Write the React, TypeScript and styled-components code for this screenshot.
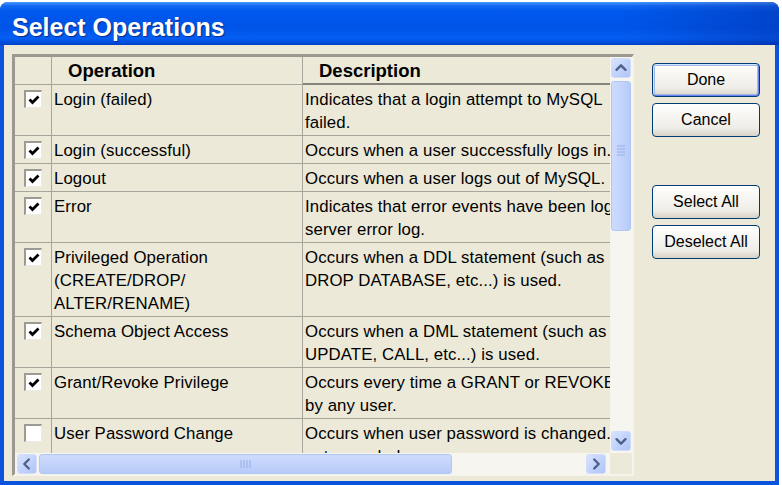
import React from "react";
import styled, { createGlobalStyle, css } from "styled-components";

const Global = createGlobalStyle`
  html, body { margin: 0; padding: 0; background: #ffffff; }
  body { width: 782px; height: 485px; overflow: hidden; font-family: "Liberation Sans", Arial, sans-serif; }
  * { box-sizing: border-box; }
`;

const Page = styled.div`
  width: 782px;
  height: 485px;
  padding-top: 2px;
`;

const Window = styled.div`
  width: 779px;
  height: 483px;
  display: flex;
  flex-direction: column;
  background: #0a54dd;
  border-radius: 8px 8px 0 0;
  overflow: hidden;
`;

const TitleBar = styled.div`
  height: 43px;
  flex: none;
  display: flex;
  align-items: center;
  padding: 8px 0 0 12px;
  background:
    linear-gradient(90deg, rgba(0, 20, 120, 0) 80%, rgba(0, 20, 120, 0.28) 100%),
    linear-gradient(180deg, #4a9bff 0%, #1268f4 9%, #0058ec 22%, #0054e8 60%, #055ef2 84%, #0050e0 93%, #003ec6 100%);
`;

const Title = styled.span`
  font-family: "Liberation Sans", Arial, sans-serif;
  font-weight: bold;
  font-size: 25px;
  color: #ffffff;
  text-shadow: 1px 1px 1px #0b2a8c;
`;

const Body = styled.div`
  flex: 1;
  margin: 0 4px 4px 4px;
  background: #ece9d8;
  display: flex;
  align-items: flex-start;
  padding: 9px 0 0 8px;
`;

const ListBox = styled.div`
  width: 622px;
  height: 422px;
  flex: none;
  border-style: solid;
  border-width: 3px 2px 2px 3px;
  border-color: #9b998f #f4f3ec #f4f3ec #9b998f;
  display: grid;
  grid-template-columns: 595px 22px;
  grid-template-rows: 396px 21px;
  background: #ece9d8;
`;

const Table = styled.div`
  grid-area: 1 / 1;
  overflow: hidden;
  display: flex;
  flex-direction: column;
`;

const COLS = "37px 251px 340px";

const HeaderRow = styled.div`
  display: grid;
  grid-template-columns: ${COLS};
  height: 28px;
  flex: none;
`;

const HeaderCell = styled.div<{ $active?: boolean }>`
  border-right: 1px solid #a8a69c;
  border-bottom: ${(p) => (p.$active ? "2px solid #858379" : "1px solid #a8a69c")};
  font-family: "Liberation Sans", Arial, sans-serif;
  font-weight: bold;
  font-size: 18.5px;
  line-height: 27px;
  padding-left: 16px;
  color: #000;
  white-space: nowrap;
  overflow: hidden;
`;

const Row = styled.div`
  display: grid;
  grid-template-columns: ${COLS};
  flex: none;
`;

const CheckCell = styled.div`
  border-right: 1px solid #a8a69c;
  border-bottom: 1px solid #a8a69c;
  display: flex;
  justify-content: center;
  align-items: flex-start;
  padding-top: 5px;
`;

const TextCell = styled.div`
  border-right: 1px solid #a8a69c;
  border-bottom: 1px solid #a8a69c;
  padding: 3px 0 1px 2px;
  font-size: 16.8px;
  letter-spacing: 0.1px;
  line-height: 23px;
  color: #000;
  white-space: nowrap;
  overflow: hidden;
`;

const Line = styled.div`
  display: block;
`;

const CheckBox = styled.div`
  width: 18px;
  height: 18px;
  background: #ffffff;
  border-style: solid;
  border-width: 2px 1px 1px 2px;
  border-color: #9c9a91 #ebeae4 #ebeae4 #9c9a91;
  display: flex;
  align-items: center;
  justify-content: center;
`;

const VScroll = styled.div`
  grid-area: 1 / 2;
  background: #f6f5f0;
  display: flex;
  flex-direction: column;
  align-items: center;
  padding: 1px 0 2px 0;
`;

const HScroll = styled.div`
  grid-area: 2 / 1;
  background: #f6f5f0;
  display: flex;
  align-items: center;
  padding: 0 4px 0 2px;
`;

const Corner = styled.div`
  grid-area: 2 / 2;
  background: #ece9d8;
`;

const ArrowBtn = styled.div`
  width: 20px;
  height: 20px;
  flex: none;
  border-radius: 3px;
  border: 1px solid #d2ddfb;
  background: linear-gradient(135deg, #d8e3fe 0%, #c2d3fc 50%, #b0c5f6 100%);
  display: flex;
  align-items: center;
  justify-content: center;
`;

const Thumb = styled.div<{ $horizontal?: boolean }>`
  flex: none;
  border-radius: 3px;
  border: 1px solid #b2c6f4;
  background: ${(p) =>
    p.$horizontal
      ? "linear-gradient(180deg, #cddbfd 0%, #c1d2fb 60%, #b7cbf8 100%)"
      : "linear-gradient(90deg, #cddbfd 0%, #c1d2fb 60%, #b7cbf8 100%)"};
  display: flex;
  align-items: center;
  justify-content: center;
  ${(p) =>
    p.$horizontal
      ? css`
          height: 20px;
          width: 413px;
          margin-left: 2px;
        `
      : css`
          width: 20px;
          height: 150px;
          margin-top: 3px;
          padding-bottom: 10px;
        `}
`;

const Spacer = styled.div`
  flex: 1;
`;

const ButtonColumn = styled.div`
  margin-left: 18px;
  padding-top: 9px;
  display: flex;
  flex-direction: column;
`;

const ButtonGroup = styled.div<{ $offset?: number }>`
  display: flex;
  flex-direction: column;
  gap: 6px;
  margin-top: ${(p) => p.$offset ?? 0}px;
`;

const Button = styled.button<{ $default?: boolean }>`
  width: 108px;
  height: 34px;
  padding: 0;
  border: 1px solid #003c74;
  border-radius: 4px;
  background: linear-gradient(180deg, #ffffff 0%, #f7f6f2 35%, #eeede8 75%, #d9d3c7 100%);
  font-family: "Liberation Sans", Arial, sans-serif;
  font-size: 16px;
  color: #000;
  ${(p) =>
    p.$default &&
    css`
      box-shadow: inset 1px 1px 0 #cee7ff, inset -1px -1px 0 #6982ee, inset 0 0 0 2px #9fb9ea;
    `}
`;

const Check = () => (
  <svg width="14" height="14" viewBox="0 0 14 14">
    <polyline points="2.5,6.5 5.5,9.5 11.5,3.5" fill="none" stroke="#000" strokeWidth="2.8" strokeLinecap="butt" strokeLinejoin="miter" />
  </svg>
);

const Chevron = ({ dir }: { dir: "up" | "down" | "left" | "right" }) => {
  const pts: Record<string, string> = {
    up: "5,12 10,7 15,12",
    down: "5,8 10,13 15,8",
    left: "12,5 7,10 12,15",
    right: "8,5 13,10 8,15",
  };
  return (
    <svg width="20" height="20" viewBox="0 0 20 20">
      <polyline points={pts[dir]} fill="none" stroke="#4d6185" strokeWidth="2.6" strokeLinecap="round" strokeLinejoin="round" />
    </svg>
  );
};

const Grip = ({ horizontal }: { horizontal?: boolean }) =>
  horizontal ? (
    <svg width="12" height="10" viewBox="0 0 12 10">
      {[1, 4, 7, 10].map((x) => (
        <line key={x} x1={x} y1="1" x2={x} y2="9" stroke="#94aee8" strokeWidth="1" />
      ))}
    </svg>
  ) : (
    <svg width="10" height="12" viewBox="0 0 10 12">
      {[1, 4, 7, 10].map((y) => (
        <line key={y} x1="1" y1={y} x2="9" y2={y} stroke="#94aee8" strokeWidth="1" />
      ))}
    </svg>
  );

type Op = { checked: boolean; name: string[]; desc: string[] };

const ops: Op[] = [
  { checked: true, name: ["Login (failed)"], desc: ["Indicates that a login attempt to MySQL", "failed."] },
  { checked: true, name: ["Login (successful)"], desc: ["Occurs when a user successfully logs in."] },
  { checked: true, name: ["Logout"], desc: ["Occurs when a user logs out of MySQL."] },
  { checked: true, name: ["Error"], desc: ["Indicates that error events have been logged", "server error log."] },
  {
    checked: true,
    name: ["Privileged Operation", "(CREATE/DROP/", "ALTER/RENAME)"],
    desc: ["Occurs when a DDL statement (such as", "DROP DATABASE, etc...) is used."],
  },
  {
    checked: true,
    name: ["Schema Object Access"],
    desc: ["Occurs when a DML statement (such as", "UPDATE, CALL, etc...) is used."],
  },
  {
    checked: true,
    name: ["Grant/Revoke Privilege"],
    desc: ["Occurs every time a GRANT or REVOKE", "by any user."],
  },
  {
    checked: false,
    name: ["User Password Change"],
    desc: ["Occurs when user password is changed.", "not recorded."],
  },
];

export default function App() {
  return (
    <>
      <Global />
      <Page>
        <Window>
          <TitleBar>
            <Title>Select Operations</Title>
          </TitleBar>
          <Body>
            <ListBox>
              <Table>
                <HeaderRow>
                  <HeaderCell />
                  <HeaderCell>Operation</HeaderCell>
                  <HeaderCell $active>Description</HeaderCell>
                </HeaderRow>
                {ops.map((op, i) => (
                  <Row key={i}>
                    <CheckCell>
                      <CheckBox>{op.checked && <Check />}</CheckBox>
                    </CheckCell>
                    <TextCell>
                      {op.name.map((l, j) => (
                        <Line key={j}>{l}</Line>
                      ))}
                    </TextCell>
                    <TextCell>
                      {op.desc.map((l, j) => (
                        <Line key={j}>{l}</Line>
                      ))}
                    </TextCell>
                  </Row>
                ))}
              </Table>
              <VScroll>
                <ArrowBtn>
                  <Chevron dir="up" />
                </ArrowBtn>
                <Thumb>
                  <Grip />
                </Thumb>
                <Spacer />
                <ArrowBtn>
                  <Chevron dir="down" />
                </ArrowBtn>
              </VScroll>
              <HScroll>
                <ArrowBtn>
                  <Chevron dir="left" />
                </ArrowBtn>
                <Thumb $horizontal>
                  <Grip horizontal />
                </Thumb>
                <Spacer />
                <ArrowBtn>
                  <Chevron dir="right" />
                </ArrowBtn>
              </HScroll>
              <Corner />
            </ListBox>
            <ButtonColumn>
              <ButtonGroup>
                <Button $default>Done</Button>
                <Button>Cancel</Button>
              </ButtonGroup>
              <ButtonGroup $offset={48}>
                <Button>Select All</Button>
                <Button>Deselect All</Button>
              </ButtonGroup>
            </ButtonColumn>
          </Body>
        </Window>
      </Page>
    </>
  );
}
